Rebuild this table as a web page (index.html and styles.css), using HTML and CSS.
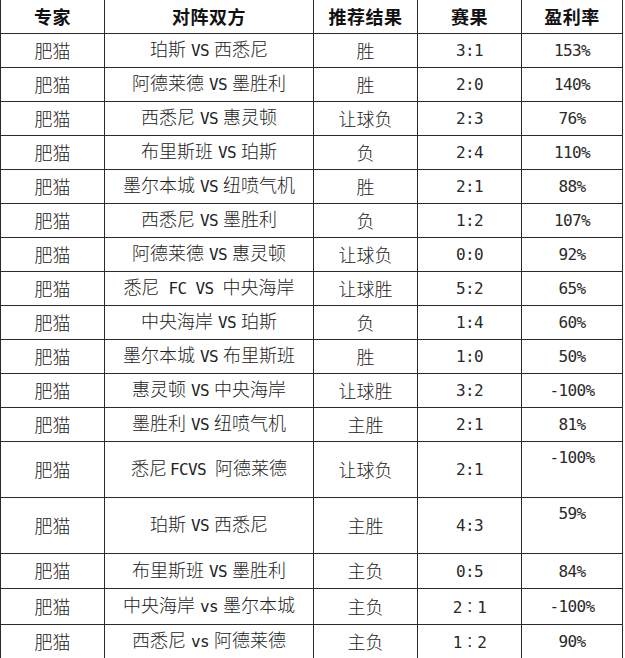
FILE: index.html
```html
<!DOCTYPE html>
<html lang="zh-CN">
<head>
<meta charset="utf-8">
<title>推荐记录</title>
<link rel="stylesheet" href="styles.css">
</head>
<body>
<table class="rec">
  <colgroup>
    <col class="c-expert">
    <col class="c-match">
    <col class="c-pick">
    <col class="c-score">
    <col class="c-rate">
  </colgroup>
  <thead>
    <tr class="head">
      <th>专家</th><th>对阵双方</th><th>推荐结果</th><th>赛果</th><th>盈利率</th>
    </tr>
  </thead>
  <tbody>
    <tr><td>肥猫</td><td>珀斯<span class="en vs">VS</span>西悉尼</td><td>胜</td><td class="num">3:1</td><td class="num">153%</td></tr>
    <tr><td>肥猫</td><td>阿德莱德<span class="en vs">VS</span>墨胜利</td><td>胜</td><td class="num">2:0</td><td class="num">140%</td></tr>
    <tr><td>肥猫</td><td>西悉尼<span class="en vs">VS</span>惠灵顿</td><td>让球负</td><td class="num">2:3</td><td class="num">76%</td></tr>
    <tr><td>肥猫</td><td>布里斯班<span class="en vs">VS</span>珀斯</td><td>负</td><td class="num">2:4</td><td class="num">110%</td></tr>
    <tr><td>肥猫</td><td>墨尔本城<span class="en vs">VS</span>纽喷气机</td><td>胜</td><td class="num">2:1</td><td class="num">88%</td></tr>
    <tr><td>肥猫</td><td>西悉尼<span class="en vs">VS</span>墨胜利</td><td>负</td><td class="num">1:2</td><td class="num">107%</td></tr>
    <tr><td>肥猫</td><td>阿德莱德<span class="en vs">VS</span>惠灵顿</td><td>让球负</td><td class="num">0:0</td><td class="num">92%</td></tr>
    <tr><td>肥猫</td><td>悉尼<span class="en"> FC VS </span>中央海岸</td><td>让球胜</td><td class="num">5:2</td><td class="num">65%</td></tr>
    <tr><td>肥猫</td><td>中央海岸<span class="en vs">VS</span>珀斯</td><td>负</td><td class="num">1:4</td><td class="num">60%</td></tr>
    <tr><td>肥猫</td><td>墨尔本城<span class="en vs">VS</span>布里斯班</td><td>胜</td><td class="num">1:0</td><td class="num">50%</td></tr>
    <tr><td>肥猫</td><td>惠灵顿<span class="en vs">VS</span>中央海岸</td><td>让球胜</td><td class="num">3:2</td><td class="num">-100%</td></tr>
    <tr><td>肥猫</td><td>墨胜利<span class="en vs">VS</span>纽喷气机</td><td>主胜</td><td class="num">2:1</td><td class="num">81%</td></tr>
    <tr class="tall"><td>肥猫</td><td>悉尼<span class="en fcvs">FCVS </span>阿德莱德</td><td>让球负</td><td class="num">2:1</td><td class="num top">-100%</td></tr>
    <tr class="tall"><td>肥猫</td><td>珀斯<span class="en vs">VS</span>西悉尼</td><td>主胜</td><td class="num">4:3</td><td class="num top">59%</td></tr>
    <tr class="r35"><td>肥猫</td><td>布里斯班<span class="en vs">VS</span>墨胜利</td><td>主负</td><td class="num">0:5</td><td class="num">84%</td></tr>
    <tr class="r36"><td>肥猫</td><td>中央海岸<span class="en vs lower">vs</span>墨尔本城</td><td>主负</td><td class="num">2<span class="fw">：</span>1</td><td class="num">-100%</td></tr>
    <tr><td>肥猫</td><td>西悉尼<span class="en vs lower">vs</span>阿德莱德</td><td>主负</td><td class="num">1<span class="fw">：</span>2</td><td class="num">90%</td></tr>
  </tbody>
</table>
</body>
</html>
```

FILE: styles.css
```css
html, body {
  margin: 0;
  padding: 0;
  background: #ffffff;
}

.rec {
  table-layout: fixed;
  width: 623px;
  border-collapse: separate;
  border-spacing: 0;
  border-left: 1px solid #2a2a2a;
  font-family: "Noto Sans CJK SC", "Noto Sans", sans-serif;
  font-size: 18px;
  color: #222;
}

.c-expert { width: 104px; }
.c-match { width: 209px; }
.c-pick { width: 104px; }
.c-score { width: 104px; }
.c-rate { width: 101px; }

.rec th,
.rec td {
  box-sizing: border-box;
  padding: 0 0 2px 0;
  border-right: 1px solid #2a2a2a;
  border-bottom: 1px solid #2a2a2a;
  text-align: center;
  vertical-align: middle;
  white-space: nowrap;
  line-height: 22px;
}

.rec tr { height: 34px; }
.rec tr.tall { height: 56px; }
.rec tr.r35 { height: 35px; }
.rec tr.r36 { height: 36px; }

.rec th {
  font-weight: 700;
  color: #111;
  letter-spacing: 0.5px;
}

.rec td { font-weight: 300; }

.en,
.num {
  font-family: "DejaVu Sans Mono", "Liberation Mono", "Noto Sans CJK TC", monospace;
  font-size: 16px;
  font-weight: 400;
  letter-spacing: -0.6px;
  white-space: pre;
}

.rec td.num {
  padding: 1px 0 0 0;
  color: #2a2a2a;
}

.fw {
  font-family: "Noto Sans CJK TC", "Noto Sans CJK SC", sans-serif;
}

.vs { margin: 0 5px; }
.fcvs { margin-left: 3px; }

.rec td.top {
  vertical-align: top;
  padding-top: 5px;
}
```
